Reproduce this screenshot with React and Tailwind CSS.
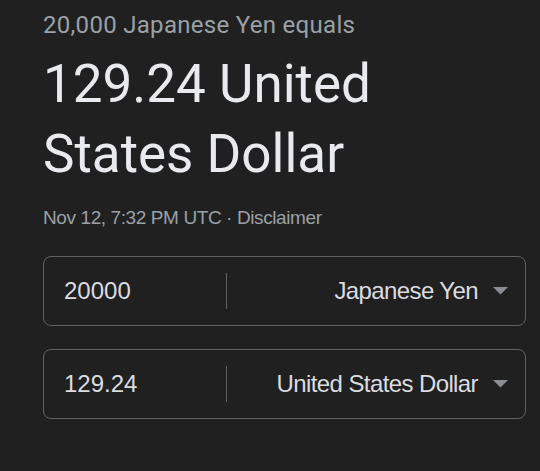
export default function App() {
  return (
    <div className="h-[471px] w-[540px] overflow-hidden bg-[#202020] pl-[43px] pr-[14px] pt-[9px]">
      <div className="font-['Roboto',sans-serif] text-[24px] leading-[32px] tracking-[0.3px] text-[#9aa0a6]">
        20,000 Japanese Yen equals
      </div>
      <div className="mt-[8px] font-['Roboto',sans-serif] text-[53px] leading-[70px] text-[#e8eaed]">
        129.24 United
        <br />
        States Dollar
      </div>
      <div className="mt-[17px] font-['Liberation_Sans',sans-serif] text-[19px] leading-[24px] tracking-[-0.4px] text-[#9aa0a6]">
        Nov 12, 7:32 PM UTC · Disclaimer
      </div>
      <div className="mt-[26px] flex flex-col gap-[23px]">
        <CurrencyRow amount="20000" currency="Japanese Yen" />
        <CurrencyRow amount="129.24" currency="United States Dollar" />
      </div>
    </div>
  )
}

function CurrencyRow({ amount, currency }) {
  return (
    <div className="flex h-[70px] items-center rounded-[8px] border border-[#5f6368] font-['Liberation_Sans',sans-serif] text-[24px] text-[#dadce0]">
      <div className="w-[182px] pl-[20px]">{amount}</div>
      <div className="h-[36px] w-px bg-[#5f6368]" />
      <div className="flex flex-1 items-center justify-end pr-[17px]">
        <span className="tracking-[-0.6px]">{currency}</span>
        <svg className="ml-[15px]" width="15" height="8" viewBox="0 0 15 8">
          <path d="M0 0h15L7.5 7.5z" fill="#8a8d91" />
        </svg>
      </div>
    </div>
  )
}
